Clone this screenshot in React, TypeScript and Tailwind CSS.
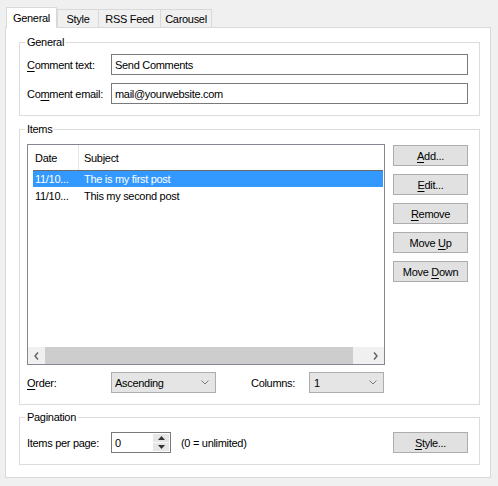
import React from "react";

function U({ children }: { children: React.ReactNode }) {
  return <span className="underline underline-offset-[2px] decoration-1">{children}</span>;
}

function Btn({ children, className = "" }: { children: React.ReactNode; className?: string }) {
  return (
    <div
      className={
        "w-[75px] h-[21px] bg-[#e1e1e1] border border-[#adadad] flex items-center justify-center text-black " +
        className
      }
    >
      {children}
    </div>
  );
}

function Group({
  label,
  className = "",
  children,
}: {
  label: string;
  className?: string;
  children: React.ReactNode;
}) {
  return (
    <div className={"relative border border-[#dcdcdc] " + className}>
      <span className="absolute left-[5px] top-[-9px] bg-white px-[2px] leading-[16px]">{label}</span>
      {children}
    </div>
  );
}

function Chevron() {
  return (
    <svg width="8" height="5" viewBox="0 0 8 5" className="shrink-0">
      <polyline points="0.5,0.5 4,4 7.5,0.5" fill="none" stroke="#7a7a7a" strokeWidth="1" />
    </svg>
  );
}

function Combo({ value, className = "" }: { value: string; className?: string }) {
  return (
    <div
      className={
        "h-[21px] bg-[#e5e5e5] border border-[#adadad] flex items-center justify-between pr-[6px] " + className
      }
    >
      <span>{value}</span>
      <Chevron />
    </div>
  );
}

function Tab({ label, selected, className = "" }: { label: string; selected?: boolean; className?: string }) {
  return selected ? (
    <div
      className={
        "relative z-10 h-[21px] mb-[-1px] bg-white border-t border-l border-r border-[#d9d9d9] flex items-center justify-center pb-[1px] " +
        className
      }
    >
      {label}
    </div>
  ) : (
    <div
      className={
        "h-[18px] bg-[#f0f0f0] border-t border-l border-r border-[#d9d9d9] -ml-[1px] flex items-center justify-center " +
        className
      }
    >
      {label}
    </div>
  );
}

export default function App() {
  return (
    <div className="w-[498px] h-[486px] bg-[#f0f0f0] text-[11px] tracking-[-0.3px] text-black font-['Liberation_Sans',Arial,sans-serif] leading-[14px]">
      <div className="flex items-end h-[27px] pl-[6px]">
        <Tab label="General" selected className="w-[51px]" />
        <Tab label="Style" className="w-[42px] ml-0" />
        <Tab label="RSS Feed" className="w-[63px]" />
        <Tab label="Carousel" className="w-[52px]" />
      </div>
      <div className="ml-[5px] w-[486px] h-[451px] bg-white border border-[#d9d9d9] pt-[14px] pl-[13px] flex flex-col">
        <Group label="General" className="w-[461px] h-[74px] pt-[11px] pl-[7px] flex flex-col gap-[8px]">
          <div className="flex items-center h-[21px]">
            <span className="w-[84px]">
              <U>C</U>omment text:
            </span>
            <div className="w-[357px] h-[21px] border border-[#7a7a7a] pl-[3px] flex items-center">Send Comments</div>
          </div>
          <div className="flex items-center h-[21px]">
            <span className="w-[84px]">
              Co<U>m</U>ment email:
            </span>
            <div className="w-[357px] h-[21px] border border-[#7a7a7a] pl-[3px] flex items-center">
              mail@yourwebsite.com
            </div>
          </div>
        </Group>

        <Group label="Items" className="mt-[13px] w-[461px] h-[276px] pt-[14px] pl-[7px]">
          <div className="flex">
            <div className="w-[358px] h-[221px] border border-[#828790] flex flex-col">
              <div className="flex h-[25px] shrink-0">
                <div className="w-[51px] border-r border-[#e5e5e5] pl-[7px] flex items-center">Date</div>
                <div className="pl-[5px] flex items-center">Subject</div>
              </div>
              <div className="ml-[5px] w-[350px] h-[17px] bg-[#3399ff] border-t border-[#6d6d6d] text-white flex items-center">
                <span className="w-[51px] pl-[2px]">11/10...</span>
                <span>The is my first post</span>
              </div>
              <div className="ml-[5px] w-[350px] h-[17px] flex items-center">
                <span className="w-[51px] pl-[2px]">11/10...</span>
                <span>This my second post</span>
              </div>
              <div className="flex-1" />
              <div className="h-[17px] flex bg-[#f0f0f0] shrink-0">
                <div className="w-[17px] flex items-center justify-center">
                  <svg width="5" height="8" viewBox="0 0 5 8">
                    <polyline points="4,0.5 1,4 4,7.5" fill="none" stroke="#606060" strokeWidth="1.4" />
                  </svg>
                </div>
                <div className="w-[308px] bg-[#cdcdcd]" />
                <div className="flex-1" />
                <div className="w-[17px] flex items-center justify-center">
                  <svg width="5" height="8" viewBox="0 0 5 8">
                    <polyline points="1,0.5 4,4 1,7.5" fill="none" stroke="#606060" strokeWidth="1.4" />
                  </svg>
                </div>
              </div>
            </div>
            <div className="ml-[8px] pt-[1px] flex flex-col gap-[8px]">
              <Btn>
                <span>
                  <U>A</U>dd...
                </span>
              </Btn>
              <Btn>
                <span>
                  <U>E</U>dit...
                </span>
              </Btn>
              <Btn>
                <span>
                  <U>R</U>emove
                </span>
              </Btn>
              <Btn>
                <span>
                  Move <U>U</U>p
                </span>
              </Btn>
              <Btn>
                <span>
                  Move <U>D</U>own
                </span>
              </Btn>
            </div>
          </div>
          <div className="flex items-center mt-[7px] h-[21px]">
            <span className="w-[84px]">
              <U>O</U>rder:
            </span>
            <Combo value="Ascending" className="w-[105px] pl-[3px]" />
            <span className="ml-[35px] w-[58px]">Columns:</span>
            <Combo value="1" className="w-[75px] pl-[4px]" />
          </div>
        </Group>

        <Group label="Pagination" className="mt-[12px] w-[461px] h-[48px] pt-[14px] pl-[7px] pr-[11px]">
          <div className="flex items-center h-[21px]">
            <span className="w-[84px]">Items per page:</span>
            <div className="w-[60px] h-[21px] border border-[#7a7a7a] flex">
              <div className="flex-1 pl-[3px] flex items-center">0</div>
              <div className="w-[16px] my-[1px] mr-[1px] flex flex-col bg-[#e6e6e6]">
                <div className="flex-1 flex items-center justify-center border-b border-[#f8f8f8]">
                  <svg width="7" height="4" viewBox="0 0 7 4">
                    <polygon points="3.5,0 7,4 0,4" fill="#333" />
                  </svg>
                </div>
                <div className="flex-1 flex items-center justify-center">
                  <svg width="7" height="4" viewBox="0 0 7 4">
                    <polygon points="0,0 7,0 3.5,4" fill="#333" />
                  </svg>
                </div>
              </div>
            </div>
            <span className="ml-[10px]">(0 = unlimited)</span>
            <Btn className="ml-auto">
              <span>
                <U>S</U>tyle...
              </span>
            </Btn>
          </div>
        </Group>
      </div>
    </div>
  );
}
